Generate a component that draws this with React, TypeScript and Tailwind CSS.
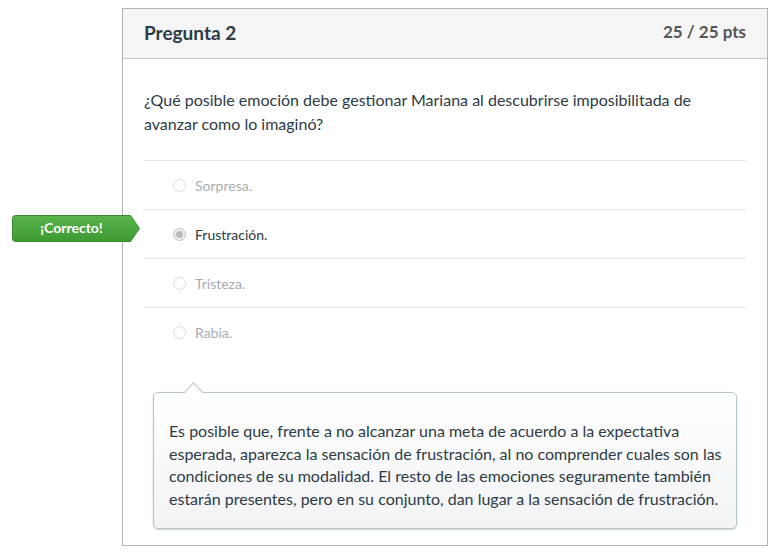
const answers = [
  { text: 'Sorpresa.', selected: false },
  { text: 'Frustración.', selected: true },
  { text: 'Tristeza.', selected: false },
  { text: 'Rabia.', selected: false },
]

const feedback = [
  'Es posible que, frente a no alcanzar una meta de acuerdo a la expectativa',
  'esperada, aparezca la sensación de frustración, al no comprender cuales son las',
  'condiciones de su modalidad. El resto de las emociones seguramente también',
  'estarán presentes, pero en su conjunto, dan lugar a la sensación de frustración.',
]

const Radio = ({ selected }: { selected: boolean }) =>
  selected ? (
    <span className="flex h-[13px] w-[13px] items-center justify-center rounded-full border border-[#c4c4c4] bg-[#ececec]">
      <span className="h-[7px] w-[7px] rounded-full bg-[#b9b9b9]" />
    </span>
  ) : (
    <span className="h-[13px] w-[13px] rounded-full border border-[#dcdcdc] bg-white" />
  )

const CorrectBadge = () => (
  <div className="absolute left-[-132px] top-[5px] h-[27px] w-[129px]">
    <svg width="129" height="27" viewBox="0 0 129 27" className="absolute inset-0">
      <defs>
        <linearGradient id="g" x1="0" y1="0" x2="0" y2="1">
          <stop offset="0" stopColor="#58b34b" />
          <stop offset="1" stopColor="#3d9a33" />
        </linearGradient>
      </defs>
      <path
        d="M3.5 0.5 H118.5 L127.5 13.5 L118.5 26.5 H3.5 Q0.5 26.5 0.5 23.5 V3.5 Q0.5 0.5 3.5 0.5 Z"
        fill="url(#g)"
        stroke="#3b8c31"
      />
    </svg>
    <span className="relative flex h-full w-[119px] items-center justify-center pb-[2px] text-[14px] font-bold text-white">
      ¡Correcto!
    </span>
  </div>
)

export default function App() {
  return (
    <div className="min-h-[559px] bg-white pt-2 font-['Lato',sans-serif] text-[#2d3b45]">
      <div className="ml-[122px] w-[646px] border border-[#b3b3b3]">
        <div className="flex h-[50px] items-center justify-between border-b border-[#c4c4c4] bg-[#f5f5f5] px-[21px]">
          <h2 className="text-[19px] font-bold text-[#2d3b45]">Pregunta 2</h2>
          <span className="mb-[3px] text-[17px] font-bold text-[#555]">25 / 25 pts</span>
        </div>
        <div className="px-[21px] pb-4 pt-[29px]">
          <p className="text-[16px] leading-[24px]">
            ¿Qué posible emoción debe gestionar Mariana al descubrirse imposibilitada de avanzar como lo imaginó?
          </p>
          <div className="mt-6">
            {answers.map((a, i) => (
              <div
                key={i}
                className="relative flex h-[49px] items-center gap-[9px] border-t border-[#e4e4e4] pl-[29px]"
              >
                {a.selected && <CorrectBadge />}
                <Radio selected={a.selected} />
                <span className={`text-[14px] ${a.selected ? 'text-[#2d3b45]' : 'text-[#a6adb2]'}`}>{a.text}</span>
              </div>
            ))}
          </div>
          <div className="relative mx-[9px] mt-[36px] rounded-[5px] border border-[#b9c3ca] bg-gradient-to-b from-white to-[#f2f3f5] pb-[18px] pl-[15px] pr-[8px] pt-[27px] shadow-[0_1px_2px_rgba(0,0,0,0.18)]">
            <span className="absolute left-[33px] top-[-8px] h-[13px] w-[13px] rotate-45 border-l border-t border-[#b9c3ca] bg-white" />
            <p className="text-[16px] leading-[22.6px] text-[#2d3b45]">
              {feedback.map((line, i) => (
                <span key={i} className="block whitespace-nowrap">
                  {line}
                </span>
              ))}
            </p>
          </div>
        </div>
      </div>
    </div>
  )
}
